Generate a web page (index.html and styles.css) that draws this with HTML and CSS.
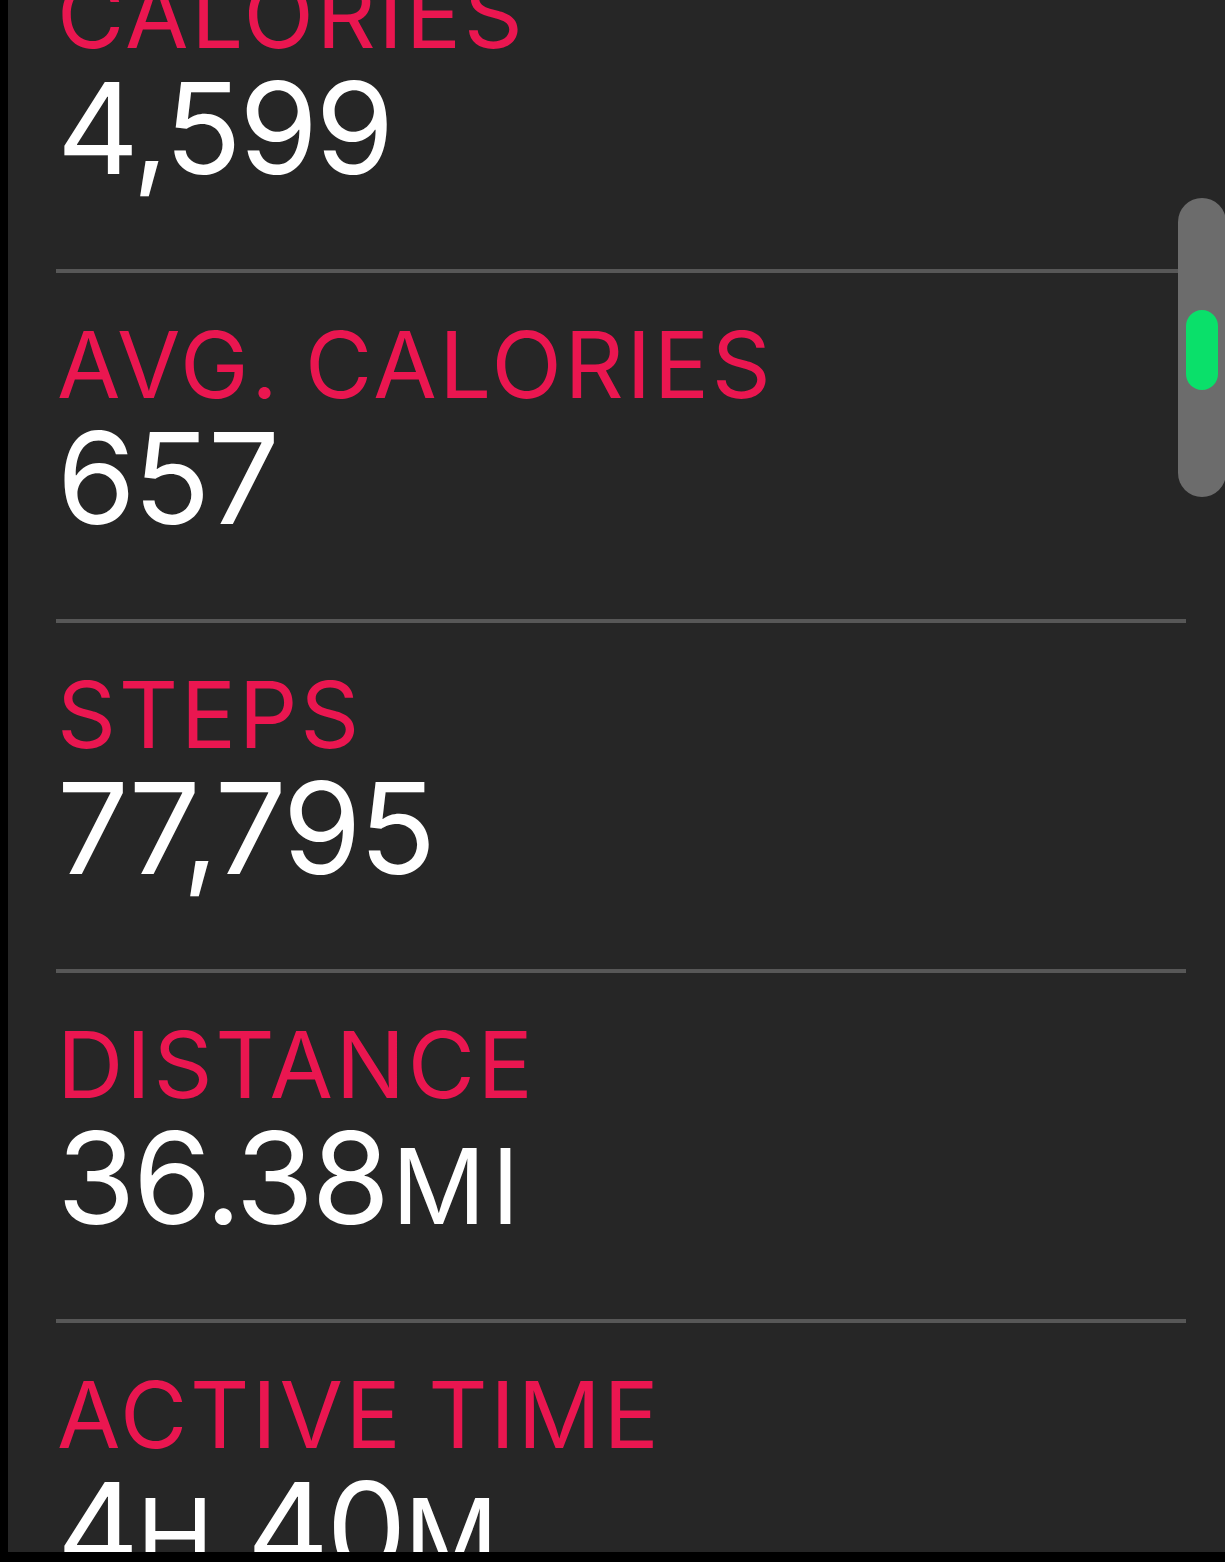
FILE: index.html
```html
<!DOCTYPE html>
<html>
<head>
<meta charset="utf-8">
<link rel="stylesheet" href="styles.css">
</head>
<body>
<div class="screen">
  <div class="list">
    <div class="row">
      <div class="label">CALORIES</div>
      <div class="value">4,599</div>
    </div>
    <div class="row">
      <div class="label">AVG. CALORIES</div>
      <div class="value">657</div>
    </div>
    <div class="row">
      <div class="label">STEPS</div>
      <div class="value">77,795</div>
    </div>
    <div class="row">
      <div class="label">DISTANCE</div>
      <div class="value">36.38<span class="unit unit-wide">MI</span></div>
    </div>
    <div class="row">
      <div class="label">ACTIVE TIME</div>
      <div class="value">4<span class="unit">H</span> 40<span class="unit">M</span></div>
    </div>
  </div>
  <div class="scrollbar"><div class="thumb"></div></div>
</div>
</body>
</html>
```
FILE: styles.css
```css
html, body {
  margin: 0;
  padding: 0;
  background: #000;
}
.screen {
  position: relative;
  margin-left: 8px;
  width: 1217px;
  height: 1552px;
  background: #262626;
  overflow: hidden;
  font-family: Inter, "Liberation Sans", sans-serif;
}
.list {
  margin-top: -81px;
  padding-left: 48px;
  width: 1130px;
}
.row {
  border-top: 4px solid #575757;
  height: 270px;
  padding-top: 43px;
  padding-bottom: 33px;
  padding-left: 1px;
}
.label {
  color: #ea1650;
  font-size: 92px;
  line-height: 97px;
  font-weight: 400;
  letter-spacing: 2.7px;
  word-spacing: -4px;
  white-space: nowrap;
}
.value {
  color: #fff;
  font-size: 127px;
  line-height: 130px;
  height: 130px;
  font-weight: 400;
  letter-spacing: -2.5px;
  white-space: nowrap;
}
.unit {
  font-size: 104px;
  line-height: 0;
  letter-spacing: 0;
}
.unit-wide {
  letter-spacing: 6px;
  margin-left: 4px;
}
.scrollbar {
  position: absolute;
  left: 1170px;
  top: 198px;
  width: 48px;
  height: 299px;
  border-radius: 24px;
  background: #6c6c6c;
}
.thumb {
  margin: 112px auto 0;
  width: 32px;
  height: 80px;
  border-radius: 16px;
  background: #0ae06a;
}
```
